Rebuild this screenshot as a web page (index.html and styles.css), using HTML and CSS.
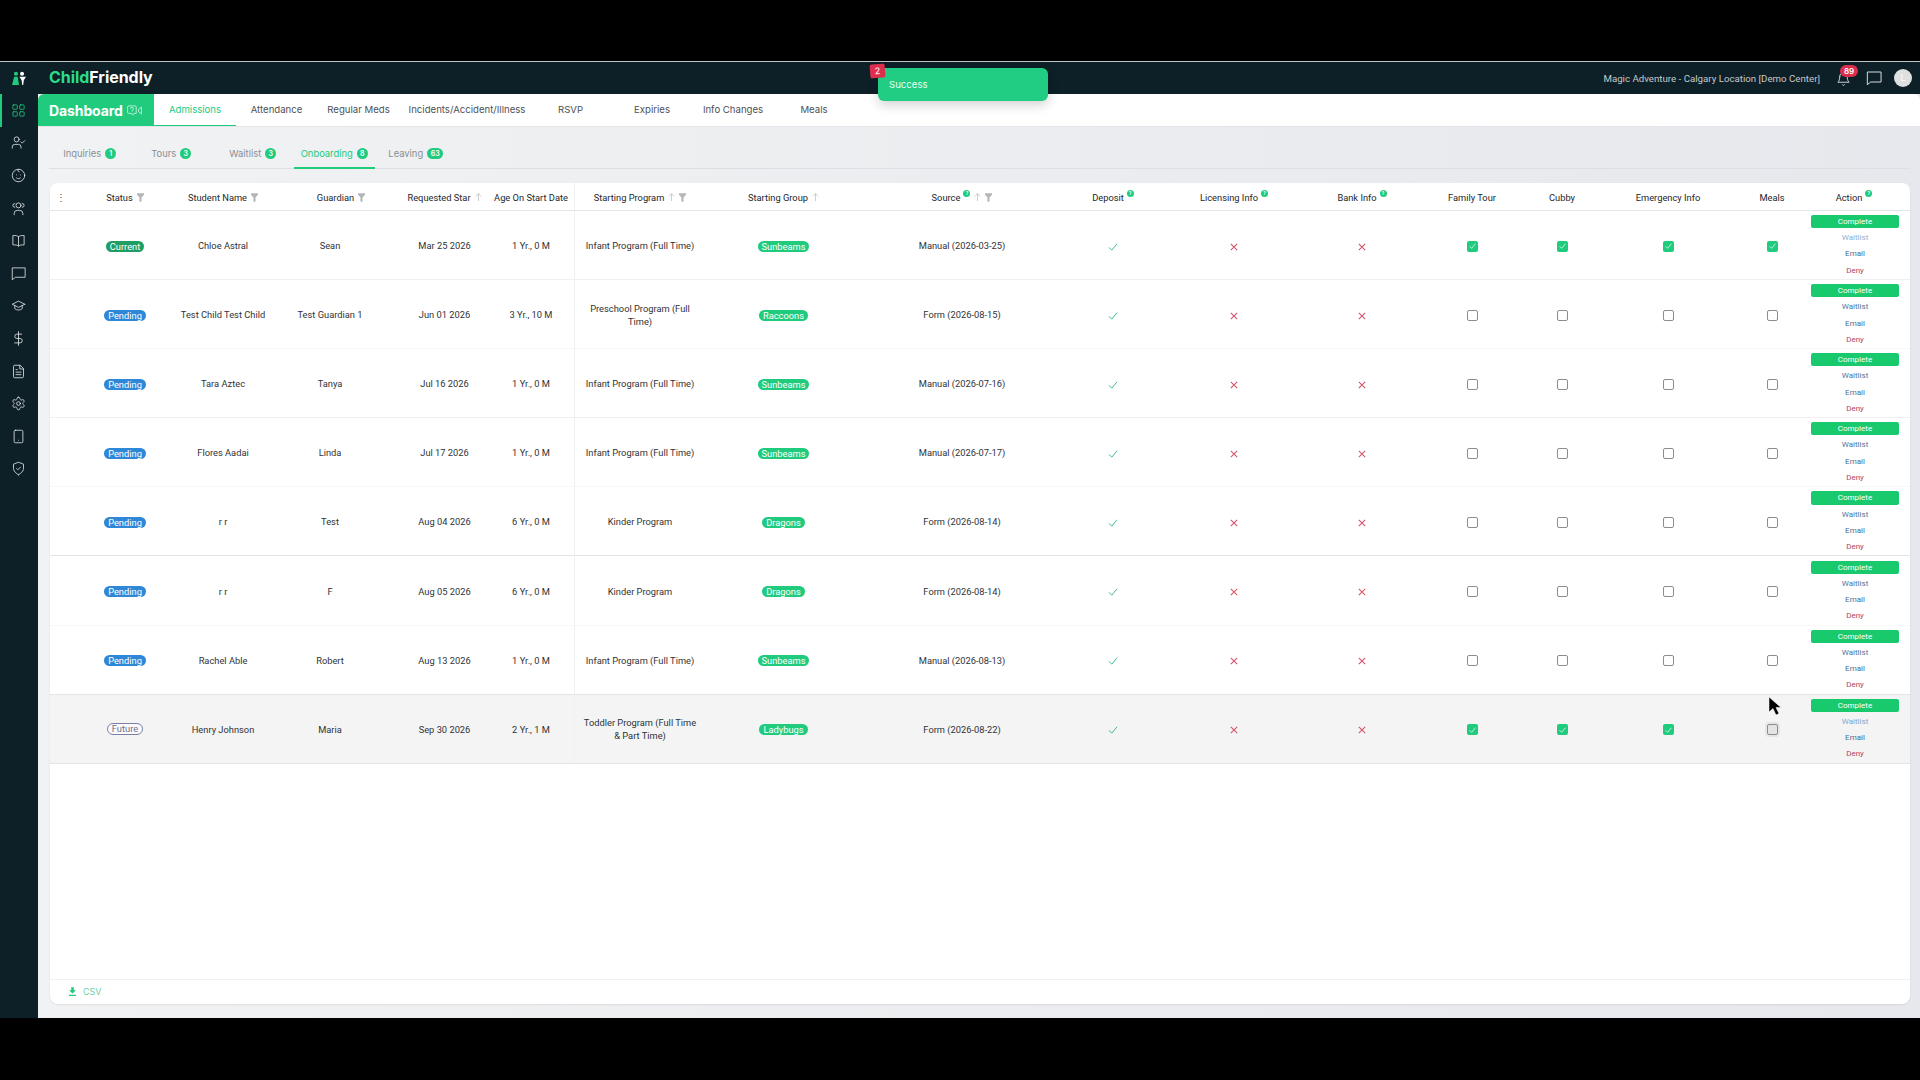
FILE: index.html
```html
<!DOCTYPE html>
<html lang="en">
<head>
    <meta charset="UTF-8" />
    <title>ChildFriendly - Admissions</title>
    <link rel="stylesheet" href="styles.css">
</head>
<body>

<svg class="sprite" xmlns="http://www.w3.org/2000/svg">
    <symbol id="i-funnel" viewBox="0 0 10 12"><path d="M0 0h10v2L6.5 6v6h-3V6L0 2z"/></symbol>
    <symbol id="i-up" viewBox="0 0 10 12"><path d="M5 12V1M1 5l4-4 4 4" fill="none" stroke="currentColor" stroke-width="1"/></symbol>
    <symbol id="i-check" viewBox="0 0 12 10"><path d="M1 5.5l3.5 3.5L11 1" fill="none" stroke="currentColor" stroke-width="1.2"/></symbol>
    <symbol id="i-x" viewBox="0 0 10 10"><path d="M1 1l8 8M9 1L1 9" fill="none" stroke="currentColor" stroke-width="1.3"/></symbol>
</svg>

<div class="app">

    <header class="topbar">
        <div class="brand">
            <svg class="brand-mark" viewBox="0 0 16 16">
                <circle cx="4.5" cy="2.5" r="2.3" fill="#21cb7e"/>
                <circle cx="11.5" cy="2.5" r="2.3" fill="#fff"/>
                <path d="M2.5 6h4l1.5 9.5H0z" fill="#21cb7e"/>
                <path d="M8.5 6H16l-2.5 4-.7 5.5h-1.1L11 10z" fill="#fff"/>
            </svg>
            <div class="brand-name"><span class="green">Child</span>Friendly</div>
        </div>
        <div class="top-right">
            <span class="location">Magic Adventure - Calgary Location [Demo Center]</span>
            <div class="bell">
                <svg class="ico" viewBox="0 0 24 24"><path d="M6 9a6 6 0 0 1 12 0c0 7 3 9 3 9H3s3-2 3-9"/><path d="M10.3 22a1.94 1.94 0 0 0 3.4 0"/></svg>
                <span class="bell-count">89</span>
            </div>
            <svg class="ico chat" viewBox="0 0 24 24"><path d="M22 3H2v19l5-4h15z"/></svg>
            <div class="avatar">L</div>
        </div>
    </header>

    <div class="toast">
        <span class="toast-count">2</span>
        Success
    </div>

    <div class="body">

        <nav class="sidebar">
            <a class="side-item active"><svg class="ico" viewBox="0 0 24 24"><rect x="3" y="3" width="7" height="7" rx="1"/><rect x="14" y="3" width="7" height="7" rx="1"/><rect x="3" y="14" width="7" height="7" rx="1"/><rect x="14" y="14" width="7" height="7" rx="1"/></svg></a>
            <a class="side-item"><svg class="ico" viewBox="0 0 24 24"><path d="M16 21v-2a4 4 0 0 0-4-4H6a4 4 0 0 0-4 4v2"/><circle cx="9" cy="7" r="4"/><path d="M16 11l2 2 4-4"/></svg></a>
            <a class="side-item"><svg class="ico" viewBox="0 0 24 24"><circle cx="12" cy="12" r="10"/><path d="M9 11h.01M15 11h.01M9 16c2 1.5 4 1.5 6 0M12 2c-2 2-1 4 1 4"/></svg></a>
            <a class="side-item"><svg class="ico" viewBox="0 0 24 24"><circle cx="12" cy="7" r="4"/><path d="M5 22v-2a5 5 0 0 1 5-5h4a5 5 0 0 1 5 5v2M6 4a3 3 0 0 0 0 6M18 4a3 3 0 0 1 0 6"/></svg></a>
            <a class="side-item"><svg class="ico" viewBox="0 0 24 24"><path d="M12 6c-2-2-5-2-9-2v15c4 0 7 0 9 2 2-2 5-2 9-2V4c-4 0-7 0-9 2zM12 6v15"/></svg></a>
            <a class="side-item"><svg class="ico" viewBox="0 0 24 24"><path d="M22 3H2v19l5-4h15z"/></svg></a>
            <a class="side-item"><svg class="ico" viewBox="0 0 24 24"><path d="M22 10 12 5 2 10l10 5 10-5z"/><path d="M6 12v5c3 3 9 3 12 0v-5"/></svg></a>
            <a class="side-item"><svg class="ico" viewBox="0 0 24 24"><path d="M12 1v22M17 5H9.5a3.5 3.5 0 0 0 0 7h5a3.5 3.5 0 0 1 0 7H6"/></svg></a>
            <a class="side-item"><svg class="ico" viewBox="0 0 24 24"><path d="M14 2H6a2 2 0 0 0-2 2v16a2 2 0 0 0 2 2h12a2 2 0 0 0 2-2V8z"/><path d="M14 2v6h6M16 13H8M16 17H8M10 9H8"/></svg></a>
            <a class="side-item"><svg class="ico" viewBox="0 0 24 24"><path d="M12.22 2h-.44a2 2 0 0 0-2 2v.18a2 2 0 0 1-1 1.73l-.43.25a2 2 0 0 1-2 0l-.15-.08a2 2 0 0 0-2.73.73l-.22.38a2 2 0 0 0 .73 2.73l.15.1a2 2 0 0 1 1 1.72v.51a2 2 0 0 1-1 1.74l-.15.09a2 2 0 0 0-.73 2.73l.22.38a2 2 0 0 0 2.73.73l.15-.08a2 2 0 0 1 2 0l.43.25a2 2 0 0 1 1 1.73V20a2 2 0 0 0 2 2h.44a2 2 0 0 0 2-2v-.18a2 2 0 0 1 1-1.73l.43-.25a2 2 0 0 1 2 0l.15.08a2 2 0 0 0 2.73-.73l.22-.39a2 2 0 0 0-.73-2.73l-.15-.08a2 2 0 0 1-1-1.74v-.5a2 2 0 0 1 1-1.74l.15-.09a2 2 0 0 0 .73-2.73l-.22-.38a2 2 0 0 0-2.73-.73l-.15.08a2 2 0 0 1-2 0l-.43-.25a2 2 0 0 1-1-1.73V4a2 2 0 0 0-2-2z"/><circle cx="12" cy="12" r="3"/></svg></a>
            <a class="side-item"><svg class="ico" viewBox="0 0 24 24"><rect x="5" y="2" width="14" height="20" rx="2"/><path d="M12 18h.01"/></svg></a>
            <a class="side-item"><svg class="ico" viewBox="0 0 24 24"><path d="M12 22s8-4 8-10V5l-8-3-8 3v7c0 6 8 10 8 10z"/><path d="m9 12 2 2 4-4"/></svg></a>
        </nav>

        <main class="main">

            <div class="navbar">
                <div class="dash-tab">
                    Dashboard
                    <svg class="dash-ico" viewBox="0 0 26 18"><path d="M16 9V3a2 2 0 0 0-2-2H3a2 2 0 0 0-2 2v9a2 2 0 0 0 2 2h5l2 3 2-3h4zM20 7l5-4v12l-5-4zM6 6a2.5 2.5 0 1 1 3 2.5V11"/></svg>
                </div>
                <div class="nav-tabs">
                    <a class="nav-tab active">Admissions</a>
                    <a class="nav-tab">Attendance</a>
                    <a class="nav-tab">Regular Meds</a>
                    <a class="nav-tab">Incidents/Accident/Illness</a>
                    <a class="nav-tab">RSVP</a>
                    <a class="nav-tab">Expiries</a>
                    <a class="nav-tab">Info Changes</a>
                    <a class="nav-tab">Meals</a>
                </div>
            </div>

            <div class="content">

                <div class="sub-tabs">
                    <a class="sub-tab">Inquiries <span class="count">1</span></a>
                    <a class="sub-tab">Tours <span class="count">3</span></a>
                    <a class="sub-tab">Waitlist <span class="count">3</span></a>
                    <a class="sub-tab active">Onboarding <span class="count">8</span></a>
                    <a class="sub-tab">Leaving <span class="count wide">63</span></a>
                </div>

                <div class="card">
                    <table class="grid">
                        <colgroup>
                            <col class="w-dots"><col class="w-status"><col class="w-student"><col class="w-guardian">
                            <col class="w-req"><col class="w-age"><col class="w-program"><col class="w-group">
                            <col class="w-source"><col class="w-deposit"><col class="w-licensing"><col class="w-bank">
                            <col class="w-family"><col class="w-cubby"><col class="w-emergency"><col class="w-meals"><col class="w-action">
                        </colgroup>
                        <thead>
                            <tr>
                                <th class="dots">⋮</th>
                                <th><div class="th">Status <svg class="funnel"><use href="#i-funnel"/></svg></div></th>
                                <th><div class="th">Student Name <svg class="funnel"><use href="#i-funnel"/></svg></div></th>
                                <th class="guardian-head"><div class="th">Guardian <svg class="funnel"><use href="#i-funnel"/></svg></div></th>
                                <th class="req"><div class="th">Requested Star <svg class="arrow"><use href="#i-up"/></svg></div></th>
                                <th class="split"><div class="th">Age On Start Date</div></th>
                                <th><div class="th">Starting Program <svg class="arrow"><use href="#i-up"/></svg> <svg class="funnel"><use href="#i-funnel"/></svg></div></th>
                                <th><div class="th">Starting Group <svg class="arrow"><use href="#i-up"/></svg></div></th>
                                <th><div class="th">Source <span class="help">?</span> <svg class="arrow"><use href="#i-up"/></svg> <svg class="funnel"><use href="#i-funnel"/></svg></div></th>
                                <th><div class="th">Deposit <span class="help">?</span></div></th>
                                <th><div class="th">Licensing Info <span class="help">?</span></div></th>
                                <th><div class="th">Bank Info <span class="help">?</span></div></th>
                                <th><div class="th">Family Tour</div></th>
                                <th><div class="th">Cubby</div></th>
                                <th><div class="th">Emergency Info</div></th>
                                <th><div class="th">Meals</div></th>
                                <th class="action"><div class="th">Action <span class="help">?</span></div></th>
                            </tr>
                        </thead>
                        <tbody>
                            <tr>
                                <td></td>
                                <td><span class="pill current">Current</span></td>
                                <td>Chloe Astral</td>
                                <td>Sean</td>
                                <td class="req">Mar 25 2026</td>
                                <td class="split">1 Yr., 0 M</td>
                                <td class="program">Infant Program (Full Time)</td>
                                <td><span class="pill group">Sunbeams</span></td>
                                <td>Manual (2026-03-25)</td>
                                <td><svg class="yes"><use href="#i-check"/></svg></td>
                                <td><svg class="no"><use href="#i-x"/></svg></td>
                                <td><svg class="no"><use href="#i-x"/></svg></td>
                                <td><span class="box on"><svg><use href="#i-check"/></svg></span></td>
                                <td><span class="box on"><svg><use href="#i-check"/></svg></span></td>
                                <td><span class="box on"><svg><use href="#i-check"/></svg></span></td>
                                <td><span class="box on"><svg><use href="#i-check"/></svg></span></td>
                                <td class="action"><div class="acts"><button class="complete">Complete</button><a class="waitlist faded">Waitlist</a><a class="email">Email</a><a class="deny">Deny</a></div></td>
                            </tr>
                            <tr class="faint">
                                <td></td>
                                <td><span class="pill pending">Pending</span></td>
                                <td>Test Child Test Child</td>
                                <td>Test Guardian 1</td>
                                <td class="req">Jun 01 2026</td>
                                <td class="split">3 Yr., 10 M</td>
                                <td class="program">Preschool Program (Full Time)</td>
                                <td><span class="pill group">Raccoons</span></td>
                                <td>Form (2026-08-15)</td>
                                <td><svg class="yes"><use href="#i-check"/></svg></td>
                                <td><svg class="no"><use href="#i-x"/></svg></td>
                                <td><svg class="no"><use href="#i-x"/></svg></td>
                                <td><span class="box"></span></td>
                                <td><span class="box"></span></td>
                                <td><span class="box"></span></td>
                                <td><span class="box"></span></td>
                                <td class="action"><div class="acts"><button class="complete">Complete</button><a class="waitlist">Waitlist</a><a class="email">Email</a><a class="deny">Deny</a></div></td>
                            </tr>
                            <tr>
                                <td></td>
                                <td><span class="pill pending">Pending</span></td>
                                <td>Tara Aztec</td>
                                <td>Tanya</td>
                                <td class="req">Jul 16 2026</td>
                                <td class="split">1 Yr., 0 M</td>
                                <td class="program">Infant Program (Full Time)</td>
                                <td><span class="pill group">Sunbeams</span></td>
                                <td>Manual (2026-07-16)</td>
                                <td><svg class="yes"><use href="#i-check"/></svg></td>
                                <td><svg class="no"><use href="#i-x"/></svg></td>
                                <td><svg class="no"><use href="#i-x"/></svg></td>
                                <td><span class="box"></span></td>
                                <td><span class="box"></span></td>
                                <td><span class="box"></span></td>
                                <td><span class="box"></span></td>
                                <td class="action"><div class="acts"><button class="complete">Complete</button><a class="waitlist">Waitlist</a><a class="email">Email</a><a class="deny">Deny</a></div></td>
                            </tr>
                            <tr class="faint">
                                <td></td>
                                <td><span class="pill pending">Pending</span></td>
                                <td>Flores Aadai</td>
                                <td>Linda</td>
                                <td class="req">Jul 17 2026</td>
                                <td class="split">1 Yr., 0 M</td>
                                <td class="program">Infant Program (Full Time)</td>
                                <td><span class="pill group">Sunbeams</span></td>
                                <td>Manual (2026-07-17)</td>
                                <td><svg class="yes"><use href="#i-check"/></svg></td>
                                <td><svg class="no"><use href="#i-x"/></svg></td>
                                <td><svg class="no"><use href="#i-x"/></svg></td>
                                <td><span class="box"></span></td>
                                <td><span class="box"></span></td>
                                <td><span class="box"></span></td>
                                <td><span class="box"></span></td>
                                <td class="action"><div class="acts"><button class="complete">Complete</button><a class="waitlist">Waitlist</a><a class="email">Email</a><a class="deny">Deny</a></div></td>
                            </tr>
                            <tr class="strong">
                                <td></td>
                                <td><span class="pill pending">Pending</span></td>
                                <td>r r</td>
                                <td>Test</td>
                                <td class="req">Aug 04 2026</td>
                                <td class="split">6 Yr., 0 M</td>
                                <td class="program">Kinder Program</td>
                                <td><span class="pill group">Dragons</span></td>
                                <td>Form (2026-08-14)</td>
                                <td><svg class="yes"><use href="#i-check"/></svg></td>
                                <td><svg class="no"><use href="#i-x"/></svg></td>
                                <td><svg class="no"><use href="#i-x"/></svg></td>
                                <td><span class="box"></span></td>
                                <td><span class="box"></span></td>
                                <td><span class="box"></span></td>
                                <td><span class="box"></span></td>
                                <td class="action"><div class="acts"><button class="complete">Complete</button><a class="waitlist">Waitlist</a><a class="email">Email</a><a class="deny">Deny</a></div></td>
                            </tr>
                            <tr class="faint">
                                <td></td>
                                <td><span class="pill pending">Pending</span></td>
                                <td>r r</td>
                                <td>F</td>
                                <td class="req">Aug 05 2026</td>
                                <td class="split">6 Yr., 0 M</td>
                                <td class="program">Kinder Program</td>
                                <td><span class="pill group">Dragons</span></td>
                                <td>Form (2026-08-14)</td>
                                <td><svg class="yes"><use href="#i-check"/></svg></td>
                                <td><svg class="no"><use href="#i-x"/></svg></td>
                                <td><svg class="no"><use href="#i-x"/></svg></td>
                                <td><span class="box"></span></td>
                                <td><span class="box"></span></td>
                                <td><span class="box"></span></td>
                                <td><span class="box"></span></td>
                                <td class="action"><div class="acts"><button class="complete">Complete</button><a class="waitlist">Waitlist</a><a class="email">Email</a><a class="deny">Deny</a></div></td>
                            </tr>
                            <tr class="strong">
                                <td></td>
                                <td><span class="pill pending">Pending</span></td>
                                <td>Rachel Able</td>
                                <td>Robert</td>
                                <td class="req">Aug 13 2026</td>
                                <td class="split">1 Yr., 0 M</td>
                                <td class="program">Infant Program (Full Time)</td>
                                <td><span class="pill group">Sunbeams</span></td>
                                <td>Manual (2026-08-13)</td>
                                <td><svg class="yes"><use href="#i-check"/></svg></td>
                                <td><svg class="no"><use href="#i-x"/></svg></td>
                                <td><svg class="no"><use href="#i-x"/></svg></td>
                                <td><span class="box"></span></td>
                                <td><span class="box"></span></td>
                                <td><span class="box"></span></td>
                                <td><span class="box"></span></td>
                                <td class="action"><div class="acts"><button class="complete">Complete</button><a class="waitlist">Waitlist</a><a class="email">Email</a><a class="deny">Deny</a></div></td>
                            </tr>
                            <tr class="hovered strong">
                                <td></td>
                                <td><span class="pill future">Future</span></td>
                                <td>Henry Johnson</td>
                                <td>Maria</td>
                                <td class="req">Sep 30 2026</td>
                                <td class="split">2 Yr., 1 M</td>
                                <td class="program">Toddler Program (Full Time &amp; Part Time)</td>
                                <td><span class="pill group">Ladybugs</span></td>
                                <td>Form (2026-08-22)</td>
                                <td><svg class="yes"><use href="#i-check"/></svg></td>
                                <td><svg class="no"><use href="#i-x"/></svg></td>
                                <td><svg class="no"><use href="#i-x"/></svg></td>
                                <td><span class="box on"><svg><use href="#i-check"/></svg></span></td>
                                <td><span class="box on"><svg><use href="#i-check"/></svg></span></td>
                                <td><span class="box on"><svg><use href="#i-check"/></svg></span></td>
                                <td><span class="box halo"></span></td>
                                <td class="action"><div class="acts"><button class="complete">Complete</button><a class="waitlist midtone">Waitlist</a><a class="email">Email</a><a class="deny">Deny</a></div></td>
                            </tr>
                        </tbody>
                    </table>

                    <div class="card-foot">
                        <svg class="csv-ico" viewBox="0 0 8 10"><path d="M2.5 0h3v3.5H8L4 7.2 0 3.5h2.5zM0 8.6h8V10H0z"/></svg>
                        <span>CSV</span>
                    </div>
                </div>

            </div>
        </main>
    </div>
</div>

<!-- mouse pointer caught in the capture -->
<svg class="pointer" viewBox="0 0 14 20"><path d="M1 1v15l4-3.5L8 19l3-1.5-3-6h5z" fill="#000" stroke="#fff" stroke-width=".5"/></svg>

</body>
</html>
```

FILE: styles.css
```css
:root {
    --dark: #0d1f27;
    --green: #21cb7e;
    --btn-green: #18c96e;
    --blue: #2f87d8;
    --red: #d4506a;
    --text: #2f3338;
    --dim: #7c8288;
}

* {
    box-sizing: border-box;
    margin: 0;
    padding: 0;
}

html, body {
    width: 1920px;
    height: 1080px;
    overflow: hidden;
    background: #000;
    font-family: Inter, "Noto Sans", sans-serif;
    font-size: 10px;
    color: var(--text);
}

.sprite {
    display: none;
}

.app {
    margin-top: 61px;
    height: 957px;
    border-top: 1px solid #bfc4c6;
    display: flex;
    flex-direction: column;
}

.ico {
    fill: none;
    stroke: currentColor;
    stroke-width: 1.5;
    stroke-linecap: round;
    stroke-linejoin: round;
}

.green { color: #2bdc8a; }

/* =========================
   TOP BAR
========================= */
.topbar {
    height: 32px;
    flex: none;
    background: var(--dark);
    display: flex;
    align-items: center;
    justify-content: space-between;
    color: #fff;
}

.brand {
    display: flex;
    align-items: center;
    padding-left: 12px;
}

.brand-mark {
    width: 14px;
    height: 15px;
}

.brand-name {
    margin-left: 23px;
    margin-top: -2px;
    font-size: 16px;
    font-weight: 700;
    letter-spacing: -0.05px;
}

.top-right {
    display: flex;
    align-items: center;
    padding-right: 8px;
}

.location {
    font-family: Roboto, sans-serif;
    font-size: 9.7px;
    color: #c4cacc;
    margin-right: 16px;
}

.bell {
    position: relative;
    width: 15px;
    height: 15px;
    margin-right: 15px;
}

.bell .ico {
    width: 15px;
    height: 15px;
    stroke-width: 1.4;
    color: #e6e9ea;
}

.bell-count {
    position: absolute;
    top: -6px;
    left: 4px;
    width: 18px;
    height: 12px;
    border-radius: 6px;
    background: #d92f4c;
    font-size: 8px;
    font-weight: 600;
    line-height: 12px;
    text-align: center;
}

.chat {
    width: 16px;
    height: 16px;
    stroke-width: 1.4;
    margin-right: 12px;
    color: #e6e9ea;
}

.avatar {
    width: 18px;
    height: 18px;
    border-radius: 50%;
    background: #dfe0e0;
    color: #fff;
    font-size: 9px;
    line-height: 18px;
    text-align: center;
}

/* =========================
   TOAST
========================= */
.toast {
    position: absolute;
    left: 878px;
    top: 68px;
    width: 170px;
    height: 33px;
    padding-left: 11px;
    border-radius: 6px;
    background: #20cd82;
    color: #e9fff4;
    font-size: 9.6px;
    line-height: 33px;
    box-shadow: 0 4px 12px rgba(0,0,0,0.18);
    z-index: 10;
}

.toast-count {
    position: absolute;
    left: -8px;
    top: -4px;
    width: 15px;
    height: 14px;
    border-radius: 2px;
    background: #dd2f4d;
    color: #fff;
    font-size: 9px;
    line-height: 14px;
    text-align: center;
    transform: rotate(-4deg);
}

/* =========================
   SIDEBAR
========================= */
.body {
    flex: 1;
    display: flex;
    min-height: 0;
}

.sidebar {
    width: 38px;
    flex: none;
    background: var(--dark);
}

.side-item {
    height: 32.6px;
    display: flex;
    align-items: center;
    justify-content: center;
    color: #e4e8e9;
    border-left: 2px solid transparent;
    padding-right: 3px;
}

.side-item .ico {
    width: 15px;
    height: 15px;
    stroke-width: 1.3;
}

.side-item.active {
    border-left-color: var(--green);
    color: var(--green);
}

/* =========================
   NAV BARS
========================= */
.main {
    flex: 1;
    min-width: 0;
    display: flex;
    flex-direction: column;
    background: linear-gradient(90deg, #f1f2f3, #e6e8ed);
}

.navbar {
    height: 32px;
    flex: none;
    background: #fff;
    display: flex;
    border-radius: 6px 6px 0 0;
    box-shadow: 0 1px 0 #e3e5e8;
}

.dash-tab {
    width: 116px;
    flex: none;
    background: var(--green);
    color: #fff;
    font-size: 14px;
    font-weight: 700;
    letter-spacing: -0.1px;
    border-radius: 6px 0 0 0;
    display: flex;
    align-items: center;
    padding-left: 11px;
}

.dash-ico {
    width: 15px;
    height: 11px;
    margin-left: 4px;
    fill: none;
    stroke: rgba(255,255,255,0.8);
    stroke-width: 1.4;
}

.nav-tabs {
    display: grid;
    grid-template-columns: 82px 81px 83px 134px 73px 90px 72px 90px;
}

.nav-tab {
    display: flex;
    align-items: center;
    justify-content: center;
    font-size: 9.6px;
    color: #4c5157;
    white-space: nowrap;
    border-bottom: 1px solid transparent;
}

.nav-tab.active {
    color: var(--green);
    border-bottom-color: var(--green);
}

.content {
    flex: 1;
    min-height: 0;
    display: flex;
    flex-direction: column;
    padding: 11px 10px 14px 12px;
}

.sub-tabs {
    display: grid;
    grid-template-columns: repeat(5, 81.5px);
    height: 32px;
    flex: none;
    margin-left: -1px;
    border-bottom: 1px solid #dcdfe3;
}

.sub-tab {
    display: flex;
    align-items: center;
    justify-content: center;
    gap: 4px;
    padding-top: 1px;
    font-size: 9.4px;
    color: #8a8f94;
    white-space: nowrap;
}

.sub-tab.active {
    color: var(--green);
    padding-top: 2px;
    border-bottom: 2px solid var(--green);
    margin-bottom: -1px;
}

.count {
    width: 11px;
    height: 11px;
    border-radius: 6px;
    background: var(--green);
    color: #fff;
    font-size: 7px;
    font-weight: 600;
    line-height: 11px;
    text-align: center;
}

.count.wide { width: 16px; }

/* =========================
   TABLE
========================= */
.card {
    flex: 1;
    min-height: 0;
    margin-top: 14px;
    background: #fff;
    border-radius: 8px;
    box-shadow: 0 1px 2px rgba(0,0,0,0.08);
    display: flex;
    flex-direction: column;
    justify-content: space-between;
    overflow: hidden;
}

.grid {
    width: 1860px;
    table-layout: fixed;
    border-collapse: separate;
    border-spacing: 0;
    font-family: Roboto, sans-serif;
    font-size: 9.3px;
}

.w-dots { width: 22px; }
.w-status { width: 106px; }
.w-student { width: 90px; }
.w-guardian { width: 124px; }
.w-req { width: 96px; }
.w-age { width: 87px; }
.w-program { width: 130px; }
.w-group { width: 157px; }
.w-source { width: 200px; }
.w-deposit { width: 102px; }
.w-licensing { width: 140px; }
.w-bank { width: 116px; }
.w-family { width: 104px; }
.w-cubby { width: 76px; }
.w-emergency { width: 136px; }
.w-meals { width: 72px; }
.w-action { width: 102px; }

th {
    height: 28px;
    padding-top: 1px;
    font-weight: 400;
    color: #23272b;
    border-bottom: 1px solid #e3e5e8;
    white-space: nowrap;
}

th.action { padding-right: 10px; }

.th {
    display: flex;
    align-items: center;
    justify-content: center;
    gap: 4px;
}

.dots {
    color: #555;
    font-size: 10px;
}

.guardian-head { padding-left: 22px; }

.funnel {
    width: 7px;
    height: 9px;
    fill: #b4b7ba;
}

.arrow {
    width: 7px;
    height: 8px;
    color: #b4b7ba;
}

.help {
    position: relative;
    top: -4px;
    margin-left: -1px;
    width: 7px;
    height: 7px;
    border-radius: 50%;
    background: var(--green);
    color: #fff;
    font-size: 5px;
    font-weight: 700;
    line-height: 7px;
    text-align: center;
}

td {
    height: 69.1px;
    padding-top: 1px;
    text-align: center;
    white-space: nowrap;
    border-bottom: 1px solid #eff0f2;
    color: var(--text);
}

tr.faint td { border-bottom-color: #f8f8f9; }
tr.strong td { border-bottom-color: #e3e5e7; }
tr.hovered td { background: #f4f4f4; }

.req { padding-left: 9px; }

.split { border-right: 1px solid #eff0f2; }

td.program {
    white-space: normal;
    padding: 1px 6px 0;
    line-height: 13px;
}

td svg {
    vertical-align: middle;
}

.pill {
    display: inline-block;
    height: 11px;
    padding: 0 4px;
    border-radius: 6px;
    color: #fff;
    font-size: 9.3px;
    line-height: 11px;
    vertical-align: middle;
}

.current { background: #1f9d62; }
.pending { background: var(--blue); }
.group { background: var(--green); }

.future {
    background: #fbfbfd;
    color: #6d6f8e;
    border: 1px solid #7d7fa8;
    height: 12px;
    line-height: 10px;
}

.yes {
    width: 10px;
    height: 8px;
    color: #3db884;
}

.no {
    width: 8px;
    height: 8px;
    color: var(--red);
}

.box {
    display: inline-block;
    width: 11px;
    height: 11px;
    border: 1.4px solid #8b8e90;
    border-radius: 2px;
    vertical-align: middle;
    background: #fff;
}

.box.on {
    background: var(--green);
    border: none;
    color: #fff;
    line-height: 11px;
}

.box.on svg {
    display: block;
    width: 7px;
    height: 6px;
    margin: 2.5px auto 0;
}

.box.halo {
    background: #e4e4e4;
    box-shadow: 0 0 0 2px #e6e6e6;
}

td.action {
    padding: 0 8px 0 0;
}

.acts {
    display: flex;
    flex-direction: column;
    align-items: center;
    font-size: 8px;
    line-height: 16.3px;
    height: 68px;
    padding-top: 4px;
}

.complete {
    width: 88px;
    height: 13.5px;
    border: none;
    border-radius: 2px;
    background: var(--btn-green);
    color: #fff;
    font-family: inherit;
    font-size: 8px;
    margin-bottom: 2px;
}

.waitlist { color: #4f76a0; }
.waitlist.faded { color: #8db2d2; }
.waitlist.midtone { color: #7ea7d0; }
.email { color: #486f92; }
.deny { color: #b24468; }

.card-foot {
    height: 25px;
    flex: none;
    border-top: 1px solid #eff0f2;
    display: flex;
    align-items: center;
    padding: 0 0 2px 19px;
    gap: 7px;
    color: #6fce9f;
    font-size: 9px;
}

.csv-ico {
    width: 7px;
    height: 9px;
    fill: var(--green);
}

.pointer {
    position: absolute;
    left: 1768px;
    top: 696px;
    width: 14px;
    height: 20px;
}
```
